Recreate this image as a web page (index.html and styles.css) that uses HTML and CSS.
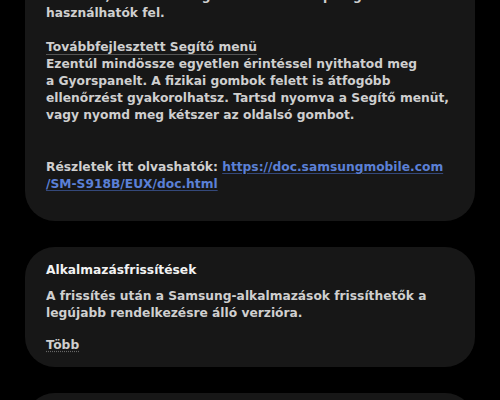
FILE: index.html
```html
<!DOCTYPE html>
<html>
<head>
    <title>Szoftverfrissítés</title>
    <link rel="stylesheet" href="styles.css">
</head>
<body>
    <div class="feed">
        <div class="card card-top">
            <p>funkción, a Galéria megosztott albumai pedig nem<br>használhatók fel.</p>

            <p><span class="heading">Továbbfejlesztett Segítő menü</span><br>
            Ezentúl mindössze egyetlen érintéssel nyithatod meg<br>
            a Gyorspanelt. A fizikai gombok felett is átfogóbb<br>
            ellenőrzést gyakorolhatsz. Tartsd nyomva a Segítő menüt,<br>
            vagy nyomd meg kétszer az oldalsó gombot.</p>

            <p class="details">Részletek itt olvashatók: <a href="#">https://doc.samsungmobile.com<br>/SM-S918B/EUX/doc.html</a></p>
        </div>

        <div class="card">
            <h2>Alkalmazásfrissítések</h2>
            <p>A frissítés után a Samsung-alkalmazások frissíthetők a<br>legújabb rendelkezésre álló verzióra.</p>
            <p class="more-row"><a class="more" href="#">Több</a></p>
        </div>

        <div class="card card-next"></div>
    </div>
</body>
</html>
```

FILE: styles.css
```css
body {
    margin: 0;
    background: #000;
    color: #cfcfcf;
    font-family: "DejaVu Sans", sans-serif;
    font-size: 12.25px;
    font-weight: bold;
    line-height: 17px;
    overflow: hidden;
}
.feed {
    display: flex;
    flex-direction: column;
    gap: 26px;
    padding: 0 25px;
    margin-top: -12px;
}
.card {
    background: #171717;
    border-radius: 30px;
    padding: 15px 21px 13px;
}
.card p {
    margin: 0 0 17px;
}
.card p:last-child {
    margin-bottom: 0;
}
.card-top {
    border-radius: 0 0 30px 30px;
    padding-top: 0;
    padding-bottom: 28px;
}
.card-top .details {
    margin-top: 35px;
}
.heading {
    text-decoration: underline;
    text-decoration-color: #555;
    text-underline-offset: 3px;
}
.card h2 {
    margin: 0 0 9px;
    font-size: 12.25px;
    color: #f2f2f2;
}
.card .more-row {
    margin-top: -2px;
}
a {
    color: #5b80d6;
    text-decoration: underline;
    text-decoration-color: #34487a;
    text-underline-offset: 2px;
}
a.more {
    color: #cfcfcf;
    text-decoration: underline dotted #666;
}
.card-next {
    height: 40px;
}
```
